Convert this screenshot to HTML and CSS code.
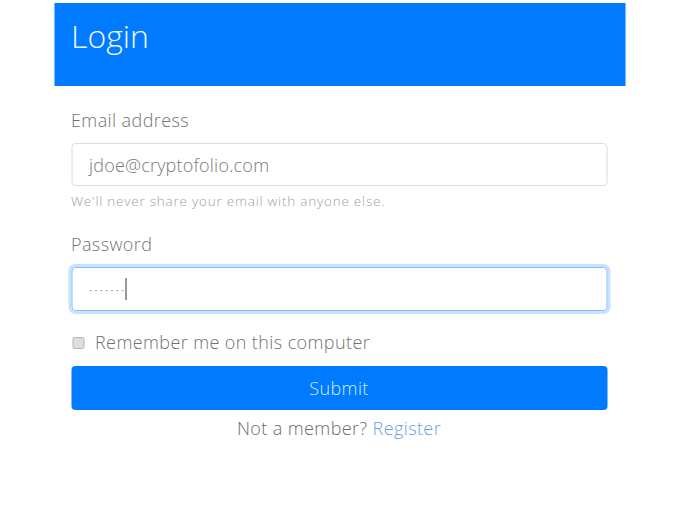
FILE: index.html
```html
<!DOCTYPE html>
<html>
<head>
<meta charset="utf-8">
<link rel="stylesheet" href="styles.css">
</head>
<body>
<div class="card">
  <div class="card-header">Login</div>
  <div class="card-body">
    <div class="label">Email address</div>
    <div class="input">jdoe@cryptofolio.com</div>
    <div class="help">We'll never share your email with anyone else.</div>
    <div class="label label-pw">Password</div>
    <div class="input input-focus"><span class="dots">·······</span><span class="caret"></span></div>
    <div class="check-row"><span class="checkbox"></span><span>Remember me on this computer</span></div>
    <div class="btn">Submit</div>
    <div class="footer">Not a member? <span class="link">Register</span></div>
  </div>
</div>
</body>
</html>
```
FILE: styles.css
```css
html, body {
  margin: 0;
  padding: 0;
  background: #fff;
}
body {
  font-family: "Open Sans", Lato, sans-serif;
  font-weight: 300;
  color: #6f6f6f;
  padding-top: 3px;
  letter-spacing: 0.4px;
}
.card {
  width: 571px;
  margin: 0 auto;
  box-sizing: border-box;
  transform: translateX(-0.5px);
}
.card-header {
  background: #007bff;
  color: #eef6ff;
  height: 83px;
  box-sizing: border-box;
  padding: 13px 17px 0;
  font-size: 32px;
  line-height: 40px;
  letter-spacing: 0;
}
.card-body {
  padding: 21px 18px 20px 17px;
}
.label {
  font-size: 18px;
  line-height: 27px;
  margin-bottom: 9px;
  color: #737373;
}
.label-pw {
  margin-bottom: 9px;
}
.input {
  height: 43px;
  box-sizing: border-box;
  border: 1px solid #dcdcdc;
  border-radius: 4px;
  padding: 0 17px;
  display: flex;
  align-items: center;
  font-size: 18px;
  color: #7a7a7a;
  letter-spacing: 0.2px;
}
.input-focus {
  height: 44px;
  border-color: #80bdff;
  box-shadow: 0 0 0 3px rgba(0, 123, 255, 0.22);
  color: #666;
}
.dots {
  font-size: 14px;
  letter-spacing: 2px;
  color: #777;
}
.caret {
  width: 1px;
  height: 22px;
  background: #333;
  margin-left: -1px;
}
.help {
  font-size: 13.5px;
  line-height: 19px;
  margin-top: 6px;
  margin-bottom: 20px;
  color: #a0a0a0;
  letter-spacing: 0.78px;
}
.check-row {
  margin-top: 18px;
  display: flex;
  align-items: center;
  gap: 11px;
  font-size: 18px;
  line-height: 27px;
  color: #717171;
}
.checkbox {
  width: 10px;
  height: 10px;
  border: 1px solid #b5b5b5;
  border-radius: 2px;
  background: #dedede;
  margin-left: 1px;
}
.btn {
  margin-top: 10px;
  height: 44px;
  background: #007bff;
  border-radius: 4px;
  color: #d3ecff;
  font-size: 18px;
  display: flex;
  align-items: center;
  justify-content: center;
}
.footer {
  margin-top: 5px;
  text-align: center;
  font-size: 18px;
  line-height: 27px;
  color: #6b6b6b;
}
.link {
  color: #6c9fe6;
}
```
